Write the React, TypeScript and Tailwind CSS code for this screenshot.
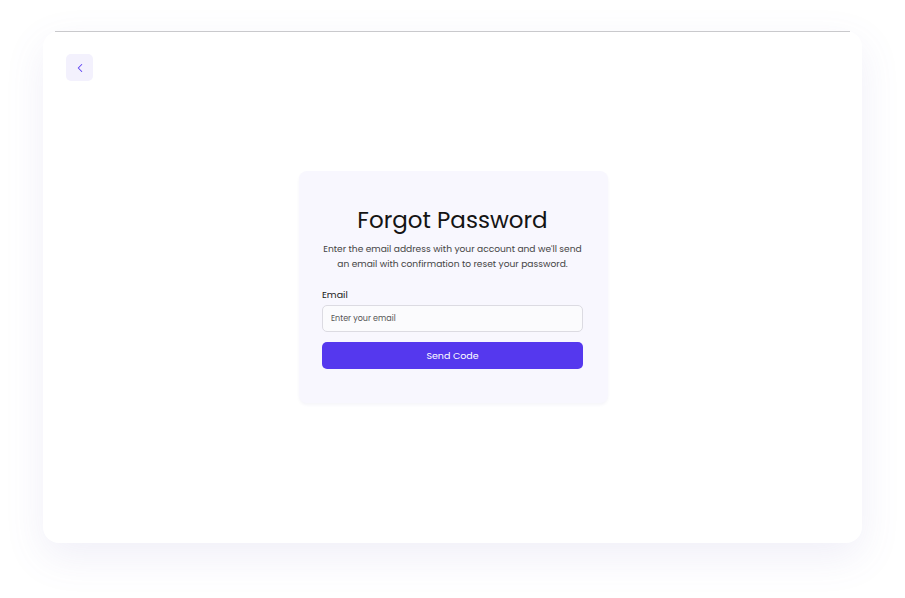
import { ChevronLeft } from "lucide-react";

const App = () => {
  return (
    <div
      className="w-[905px] h-[598px] bg-white pt-[31px] pl-[43px] overflow-hidden"
      style={{ fontFamily: "Poppins, 'Open Sans', 'Noto Sans', sans-serif" }}
    >
      {/* Frame */}
      <div className="relative w-[819px] h-[512px] bg-white rounded-[16px] shadow-[0_14px_40px_rgba(110,100,190,0.10)] grid">
        <div className="absolute top-0 left-[12px] right-[12px] h-px bg-[#c9c9cc]" />

        {/* Back */}
        <div className="col-start-1 row-start-1 self-start justify-self-start ml-[23px] mt-[23px]">
          <button className="flex items-center justify-center w-[27px] h-[27px] rounded-[5px] bg-[#f3f1fd] text-[#5b3ff2]">
            <ChevronLeft size={14} strokeWidth={1.75} />
          </button>
        </div>

        {/* Panel */}
        <div className="col-start-1 row-start-1 self-center justify-self-center ml-[2px]">
          <div className="w-[309px] bg-[#f8f7fe] rounded-[8px] shadow-[0_2px_3px_rgba(90,80,160,0.06)] pl-[23px] pr-[25px] pt-[33px] pb-[34px]">
            <h1 className="text-center text-[23px] leading-[32px] font-normal text-[#141414]">
              Forgot Password
            </h1>
            <p className="mt-[5px] text-center text-[9.1px] leading-[15px] text-[#454545] whitespace-nowrap">
              Enter the email address with your account and we'll send
              <br />
              an email with confirmation to reset your password.
            </p>

            <form className="mt-[17px]" onSubmit={(e) => e.preventDefault()}>
              <label
                htmlFor="email"
                className="block text-[9.5px] leading-[14px] font-normal text-[#1a1a1a] mb-[2px]"
              >
                Email
              </label>
              <input
                id="email"
                type="email"
                placeholder="Enter your email"
                className="w-full h-[27px] px-[8px] rounded-[5px] border border-[#dcdbe2] bg-[#fbfbfd] text-[8px] placeholder:text-[#555] focus:outline-none"
              />
              <button
                type="submit"
                className="mt-[10px] w-full h-[27px] rounded-[5px] bg-[#5538ee] text-white text-[9.5px] font-normal"
              >
                Send Code
              </button>
            </form>
          </div>
        </div>
      </div>
    </div>
  );
};

export default App;
